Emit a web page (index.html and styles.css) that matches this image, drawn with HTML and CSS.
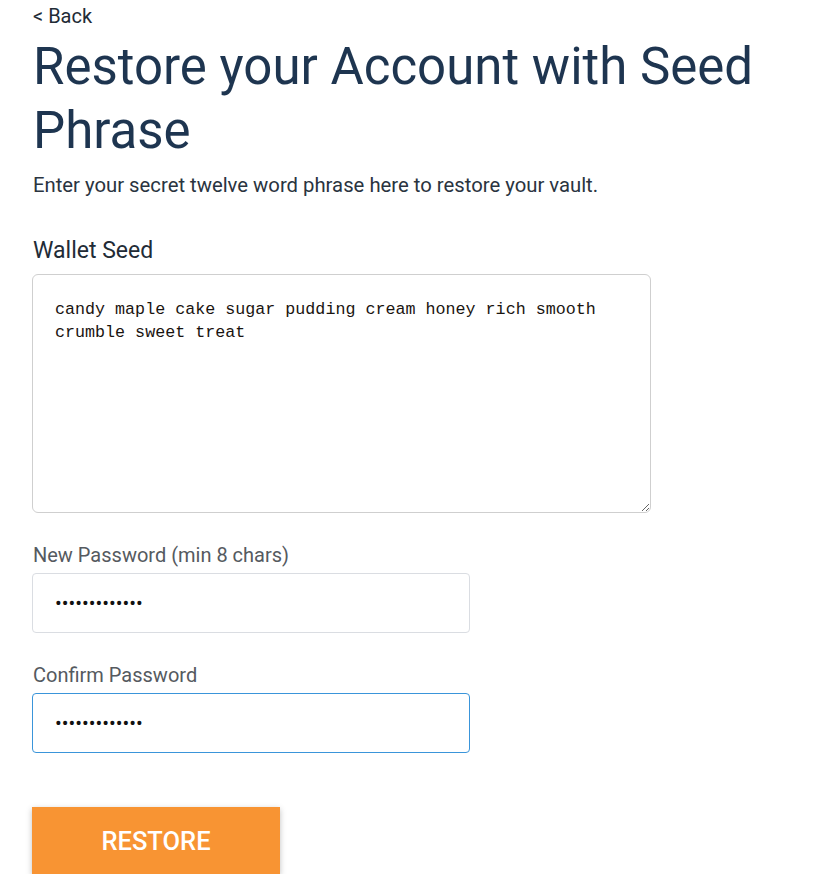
FILE: index.html
```html
<!DOCTYPE html>
<html lang="en">
<head>
<meta charset="utf-8">
<title>Restore your Account with Seed Phrase</title>
<link rel="stylesheet" href="styles.css">
</head>
<body>
<main class="page">
  <a class="back" href="#">&lt; Back</a>
  <h1 class="title">Restore your Account with Seed Phrase</h1>
  <p class="subtitle">Enter your secret twelve word phrase here to restore your vault.</p>
  <label class="seed-label" for="seed">Wallet Seed</label>
  <textarea id="seed" class="seed">candy maple cake sugar pudding cream honey rich smooth crumble sweet treat</textarea>
  <label class="field-label first" for="pw">New Password (min 8 chars)</label>
  <input id="pw" class="field" type="password" value="sweettreats12">
  <label class="field-label" for="pw2">Confirm Password</label>
  <input id="pw2" class="field focused" type="password" value="sweettreats12">
  <button class="restore" type="button">RESTORE</button>
</main>
</body>
</html>
```

FILE: styles.css
```css
* { box-sizing: border-box; }
html, body { margin: 0; padding: 0; background: #ffffff; }
body { font-family: Roboto, "Noto Sans", sans-serif; }

.page {
  display: flex;
  flex-direction: column;
  align-items: flex-start;
  padding: 4px 0 0 33px;
}

.back {
  font-size: 20px;
  line-height: 24px;
  color: #222b36;
  text-decoration: none;
}

.title {
  margin: 7px 0 0 0;
  font-size: 51px;
  line-height: 64px;
  font-weight: 400;
  color: #1e3550;
  width: 760px;
}

.subtitle {
  margin: 10px 0 0 0;
  font-size: 20.3px;
  line-height: 24px;
  color: #2a3440;
}

.seed-label {
  margin-top: 40px;
  font-size: 23px;
  line-height: 28px;
  color: #222b36;
}

.seed {
  margin: 9px 0 0 -1px;
  width: 619px;
  height: 239px;
  padding: 23px 22px 22px;
  border: 1px solid #cfcfcf;
  border-radius: 6px;
  font-family: "Liberation Mono", "DejaVu Sans Mono", monospace;
  font-size: 16.7px;
  line-height: 23px;
  color: #1a1410;
  resize: vertical;
  outline: none;
}

.field-label {
  margin-top: 30px;
  font-size: 20px;
  line-height: 24px;
  color: #555a60;
}
.field-label.first { margin-top: 30px; }

.field {
  margin: 6px 0 0 -1px;
  width: 438px;
  height: 60px;
  padding: 0 22px;
  border: 1px solid #dadde2;
  border-radius: 4px;
  font-family: Roboto, sans-serif;
  font-size: 20px;
  color: #111;
  outline: none;
  background: #fff;
}
.field.focused { border-color: #3a95da; }

.restore {
  margin: 54px 0 0 -1px;
  width: 248px;
  height: 67px;
  border: none;
  background: #f89433;
  color: #ffffff;
  font-family: Roboto, sans-serif;
  font-size: 25.5px;
  font-weight: 500;
  box-shadow: 0 2px 6px rgba(0, 0, 0, 0.25);
  cursor: pointer;
}
```
